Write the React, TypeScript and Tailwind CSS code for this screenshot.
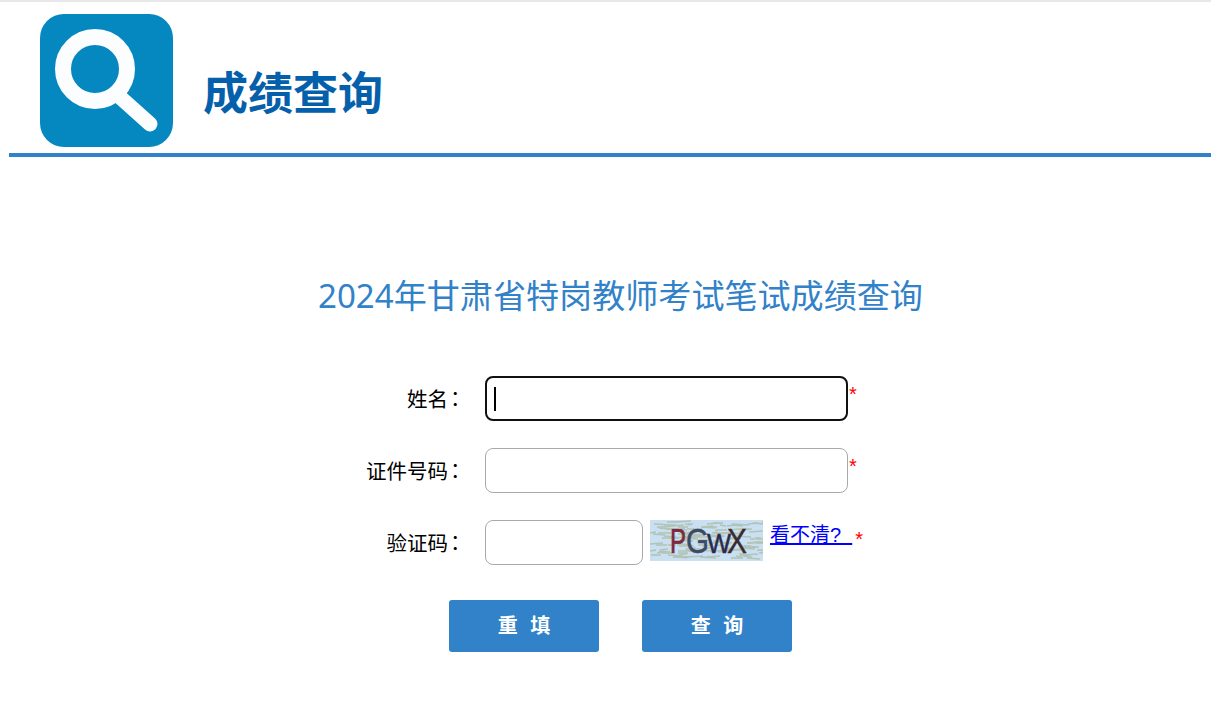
import React from "react";

const font = { fontFamily: '"Noto Sans CJK SC", "Noto Sans", sans-serif' };
const latinFirst = { fontFamily: '"Noto Sans", "Noto Sans CJK SC", sans-serif' };
const linkFont = { fontFamily: '"Liberation Sans", "Noto Sans CJK SC", sans-serif' };

function Logo() {
  return (
    <svg width="135" height="135" viewBox="0 0 135 135" className="block shrink-0">
      <rect x="1" y="1" width="133" height="133" rx="24" fill="#0587bf" />
      <circle cx="56" cy="56" r="32" fill="none" stroke="#fcfdfe" strokeWidth="16" />
      <path d="M82 85 L111 111" stroke="#fcfdfe" strokeWidth="15" strokeLinecap="round" />
    </svg>
  );
}

const noise: number[][] = [];
{
  let s = 17;
  const r = (n: number) => {
    s = (s * 137 + 91) % 1009;
    return s % n;
  };
  for (let i = 0; i < 130; i++) {
    const band = [3, 6, 9, 13, 16, 19, 22, 25, 29, 31, 34, 37][i % 12];
    const x = r(113);
    const y = band + r(3) - 1;
    const len = 4 + r(14);
    const rise = r(3) - 1;
    noise.push([x, y, len, rise]);
  }
}

function Captcha() {
  const f = '"Liberation Sans", sans-serif';
  return (
    <svg width="113" height="41" viewBox="0 0 113 41" className="block shrink-0">
      <rect width="113" height="41" fill="#c9dff2" />
      <g fill="none" stroke="#b3c3b6" strokeWidth="1.6">
        {noise.map(([x, y, len, rise], i) => (
          <path key={i} d={`M${x} ${y} l${len} ${rise}`} />
        ))}
      </g>
      <text x="20" y="33" fontFamily={f} fontSize="35" fill="#7a2a3c" stroke="#7a2a3c" strokeWidth="0.7" textLength="16" lengthAdjust="spacingAndGlyphs">P</text>
      <text x="36" y="33" fontFamily={f} fontSize="35" fill="#3c4a66" stroke="#3c4a66" strokeWidth="0.5" textLength="23" lengthAdjust="spacingAndGlyphs">G</text>
      <text x="57" y="33" fontFamily={f} fontSize="28" fill="#2a2a50" stroke="#2a2a50" strokeWidth="0.5" textLength="24" lengthAdjust="spacingAndGlyphs">W</text>
      <text x="77" y="33" fontFamily={f} fontSize="35" fill="#3a2a30" stroke="#3a2a30" strokeWidth="0.4" textLength="20" lengthAdjust="spacingAndGlyphs">X</text>
    </svg>
  );
}

function Star() {
  return (
    <span className="ml-[1px] mt-[7px] block text-[20px] leading-[23px] text-[#ff0000]" style={linkFont}>*</span>
  );
}

function Label({ text }: { text: string }) {
  return (
    <label className="w-[129px] shrink-0 text-right text-[20.5px] leading-[45px] text-black" style={font}>
      {text}
      <span
        className="ml-[-3px] inline-block w-[22px] text-left"
        style={{ fontFamily: '"Noto Sans CJK TC", sans-serif' }}
      >
        ：
      </span>
    </label>
  );
}

function ActionButton({ text }: { text: string }) {
  return (
    <button
      type="button"
      className="h-[52px] w-[150px] rounded-[3px] bg-[#3182c8] pb-[2px] text-[20px] font-bold text-white [word-spacing:8px]"
    >
      {text}
    </button>
  );
}

export default function App() {
  return (
    <div className="min-h-[714px] bg-white border-t-2 border-[#e8e8e8]" style={font}>
      <header className="ml-[9px] flex h-[155px] items-start border-b-4 border-[#3182c8] pl-[30px] pt-[11px]">
        <Logo />
        <h1 className="ml-[29px] mt-[50px] text-[45px] font-bold leading-[56px] text-[#0560ab]">成绩查询</h1>
      </header>

      <h2 className="ml-[318px] mt-[114px] text-[33.1px] font-normal leading-[50px] text-[#3182c8]" style={latinFirst}>
        2024年甘肃省特岗教师考试笔试成绩查询
      </h2>

      <form className="ml-[338px] mt-[55px] flex flex-col gap-[27px]">
        <div className="flex h-[45px] items-start">
          <Label text="姓名" />
          <div className="ml-[18px] flex h-[45px] w-[363px] items-center rounded-[8px] border-2 border-[#101010] pl-[7px]">
            <span className="block h-[24px] w-[2px] bg-black" />
          </div>
          <Star />
        </div>
        <div className="flex h-[45px] items-start">
          <Label text="证件号码" />
          <div className="ml-[18px] h-[45px] w-[363px] rounded-[8px] border border-[#a9a9a9]" />
          <Star />
        </div>
        <div className="flex h-[45px] items-start">
          <Label text="验证码" />
          <div className="ml-[18px] h-[45px] w-[158px] rounded-[8px] border border-[#a9a9a9]" />
          <div className="ml-[7px]"><Captcha /></div>
          <a href="#" className="ml-[7px] text-[20px] leading-[30px] text-[#0000ff] underline whitespace-pre" style={linkFont}>看不清?  </a>
          <span className="ml-[2px] mt-[1px]"><Star /></span>
        </div>
        <div className="ml-[111px] mt-[8px] flex gap-[43px]">
          <ActionButton text="重 填" />
          <ActionButton text="查 询" />
        </div>
      </form>
    </div>
  );
}
